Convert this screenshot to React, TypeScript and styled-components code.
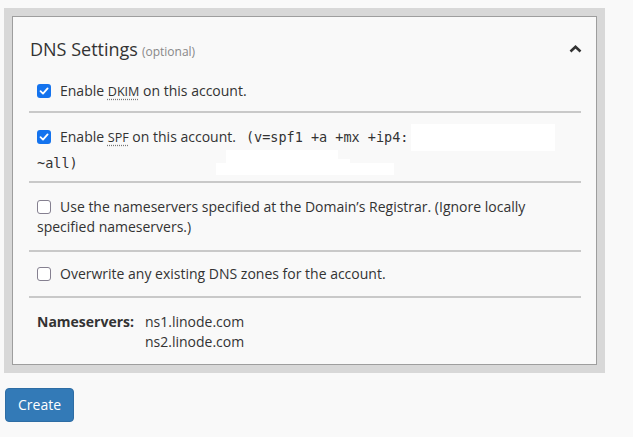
import React from "react";
import styled, { createGlobalStyle } from "styled-components";

const GlobalStyle = createGlobalStyle`
  html, body {
    margin: 0;
    padding: 0;
    background: #f9f9f9;
  }
  body {
    font-family: "Open Sans", "Liberation Sans", sans-serif;
    font-size: 14px;
    line-height: 20px;
    color: #333;
  }
`;

const Page = styled.div`
  padding: 8px 0 0 4px;
`;

const Well = styled.section`
  width: 601px;
  box-sizing: border-box;
  background: #d8d8d8;
  padding: 8px;
`;

const Box = styled.div`
  border: 1px solid #9e9e9e;
  background: #f9f9f9;
`;

const Header = styled.div`
  display: flex;
  align-items: center;
  justify-content: space-between;
  padding: 20px 14px 4px 17px;
`;

const Title = styled.h3`
  margin: 0;
  font-size: 18px;
  line-height: 25px;
  font-weight: 400;
  color: #333;
`;

const Optional = styled.span`
  font-size: 12px;
  color: #888;
  margin-left: 4px;
`;

const Chevron = styled.svg`
  display: block;
  width: 13px;
  height: 8px;
  margin-top: -4px;
`;

const List = styled.div`
  margin: 0 15px 0 16px;
`;

const Row = styled.div<{ $pt: number; $pb: number; $lh?: number; $first?: boolean }>`
  position: relative;
  padding: ${(p) => p.$pt}px 8px ${(p) => p.$pb}px;
  line-height: ${(p) => p.$lh ?? 20}px;
  border-top: ${(p) => (p.$first ? "none" : "2px solid #c9c9c9")};
`;

const Label = styled.label`
  cursor: pointer;
`;

const Box14 = styled.span<{ $checked?: boolean }>`
  display: inline-block;
  box-sizing: border-box;
  width: 14px;
  height: 14px;
  margin-right: 9px;
  vertical-align: -2px;
  border-radius: 3px;
  background: ${(p) => (p.$checked ? "#1473ee" : "#fff")};
  border: ${(p) => (p.$checked ? "none" : "1.5px solid #858090")};
  position: relative;
  svg {
    position: absolute;
    left: 2px;
    top: 2px;
  }
`;

const Abbr = styled.abbr`
  font-size: 90%;
  text-decoration: underline dotted #777;
  text-underline-offset: 3px;
`;

const Code = styled.code`
  font-family: "DejaVu Sans Mono", "Liberation Mono", monospace;
  font-size: 13.5px;
  margin-left: 10px;
  color: #333;
`;

const Redact = styled.span`
  display: inline-block;
  width: 144px;
  height: 0;
  position: relative;
  &::after {
    content: "";
    position: absolute;
    left: 3px;
    top: -18px;
    width: 144px;
    height: 27px;
    background: #fff;
  }
`;

const Patch = styled.span`
  position: absolute;
  background: #fff;
`;

const NsGrid = styled.div`
  display: grid;
  grid-template-columns: auto 1fr;
  column-gap: 11px;
`;

const NsLabel = styled.div`
  font-weight: 700;
`;

const Button = styled.button`
  margin-top: 15px;
  margin-left: 1px;
  font-family: "Open Sans", "Liberation Sans", sans-serif;
  font-size: 14px;
  line-height: 20px;
  padding: 6px 12px;
  color: #fff;
  background: #337ab7;
  border: 1px solid #2e6da4;
  border-radius: 4px;
  cursor: pointer;
`;

function Check({ checked }: { checked?: boolean }) {
  return (
    <Box14 $checked={checked}>
      {checked && (
        <svg width="10" height="10" viewBox="0 0 10 10">
          <polyline
            points="1.5,5.2 4,7.6 8.6,2.4"
            fill="none"
            stroke="#fff"
            strokeWidth="1.8"
            strokeLinecap="round"
            strokeLinejoin="round"
          />
        </svg>
      )}
    </Box14>
  );
}

export default function App() {
  return (
    <>
      <GlobalStyle />
      <Page>
        <Well>
          <Box>
            <Header>
              <Title>
                DNS Settings<Optional>(optional)</Optional>
              </Title>
              <Chevron viewBox="0 0 13 8">
                <polyline
                  points="1.5,6.5 6.5,1.8 11.5,6.5"
                  fill="none"
                  stroke="#333"
                  strokeWidth="2.6"
                />
              </Chevron>
            </Header>
            <List>
              <Row $first $pt={13} $pb={9}>
                <Label>
                  <Check checked />
                  Enable <Abbr title="DomainKeys Identified Mail">DKIM</Abbr> on this account.
                </Label>
              </Row>
              <Row $pt={11} $pb={5} $lh={25}>
                <Label>
                  <Check checked />
                  Enable <Abbr title="Sender Policy Framework">SPF</Abbr> on this account.
                  <Code>
                    (v=spf1 +a +mx +ip4:<Redact /> ~all)
                  </Code>
                </Label>
                <Patch style={{ left: 197, top: 37, width: 112, height: 9 }} />
                <Patch style={{ left: 197, top: 46, width: 124, height: 4 }} />
                <Patch style={{ left: 187, top: 50, width: 178, height: 12 }} />
              </Row>
              <Row $pt={14} $pb={13}>
                <Label>
                  <Check />
                  Use the nameservers specified at the Domain’s Registrar. (Ignore locally
                  specified nameservers.)
                </Label>
              </Row>
              <Row $pt={12} $pb={12}>
                <Label>
                  <Check />
                  Overwrite any existing DNS zones for the account.
                </Label>
              </Row>
              <Row $pt={14} $pb={12}>
                <NsGrid>
                  <NsLabel>Nameservers:</NsLabel>
                  <div>
                    ns1.linode.com
                    <br />
                    ns2.linode.com
                  </div>
                </NsGrid>
              </Row>
            </List>
          </Box>
        </Well>
        <Button>Create</Button>
      </Page>
    </>
  );
}
